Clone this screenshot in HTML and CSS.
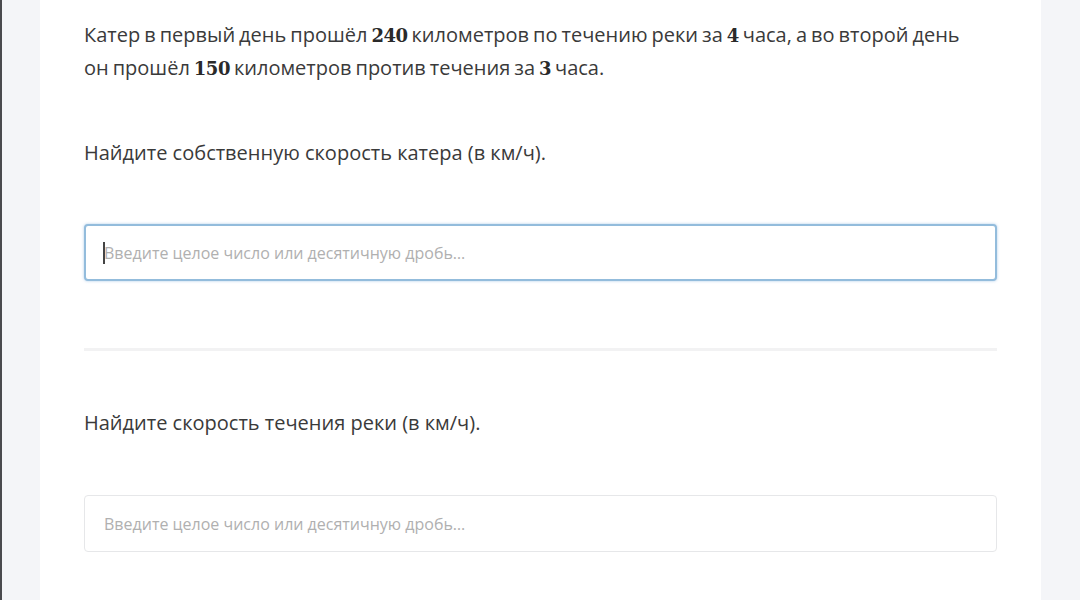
FILE: index.html
```html
<!DOCTYPE html>
<html lang="ru">
<head>
<meta charset="utf-8">
<link rel="stylesheet" href="styles.css">
</head>
<body>
<div class="page">
  <main class="card">
    <p class="task">Катер в первый день прошёл <b class="num">240</b> километров по течению реки за <b class="num">4</b> часа, а во второй день он прошёл <b class="num">150</b> километров против течения за <b class="num">3</b> часа.</p>
    <section class="q q-first">
      <p class="q-text">Найдите собственную скорость катера (в км/ч).</p>
      <div class="field field-focus"><span class="caret"></span><span class="ph">Введите целое число или десятичную дробь…</span></div>
    </section>
    <hr class="divider">
    <section class="q q-second">
      <p class="q-text">Найдите скорость течения реки (в км/ч).</p>
      <div class="field"><span class="ph">Введите целое число или десятичную дробь…</span></div>
    </section>
  </main>
</div>
</body>
</html>
```
FILE: styles.css
```css
* { box-sizing: border-box; }
html, body { margin: 0; padding: 0; height: 100%; }
body {
  background: #f4f5f8;
  font-family: "Open Sans", "Noto Sans", sans-serif;
  color: #3a3a3a;
  overflow: hidden;
}
.page {
  height: 600px;
  border-left: 2px solid #4a4a4e;
  padding-left: 38px;
  display: flex;
}
.card {
  width: 1001px;
  background: #ffffff;
  padding: 18px 44px 0 44px;
}
.task {
  margin: 0;
  font-size: 20px;
  line-height: 33px;
  word-spacing: -1.2px;
  max-width: 900px;
}
.num {
  font-family: "DejaVu Serif", "Liberation Serif", serif;
  font-weight: bold;
  font-size: 18px;
  line-height: 1;
  color: #2a2a2a;
  letter-spacing: -0.5px;
  word-spacing: 0;
}
.q-text {
  margin: 0;
  font-size: 20px;
  line-height: 34px;
}
.q-first { margin-top: 52px; }
.q-first .q-text { margin-bottom: 54px; }
.q-second { margin-top: 55px; }
.q-second .q-text { margin-bottom: 55px; }
.field {
  height: 57px;
  border: 1px solid #e6e7e9;
  border-radius: 4px;
  display: flex;
  align-items: center;
  padding-left: 19px;
  background: #fff;
}
.field-focus {
  border: 2px solid #93bcdc;
  box-shadow: 0 0 3px rgba(120, 170, 220, 0.6);
  padding-left: 17px;
}
.caret {
  width: 2px;
  height: 22px;
  background: #444;
  margin-right: -1px;
}
.ph {
  font-size: 16px;
  color: #b0b0b0;
}
.divider {
  margin: 67px 0 0 0;
  border: 0;
  height: 3px;
  background: #f2f2f3;
}
```
